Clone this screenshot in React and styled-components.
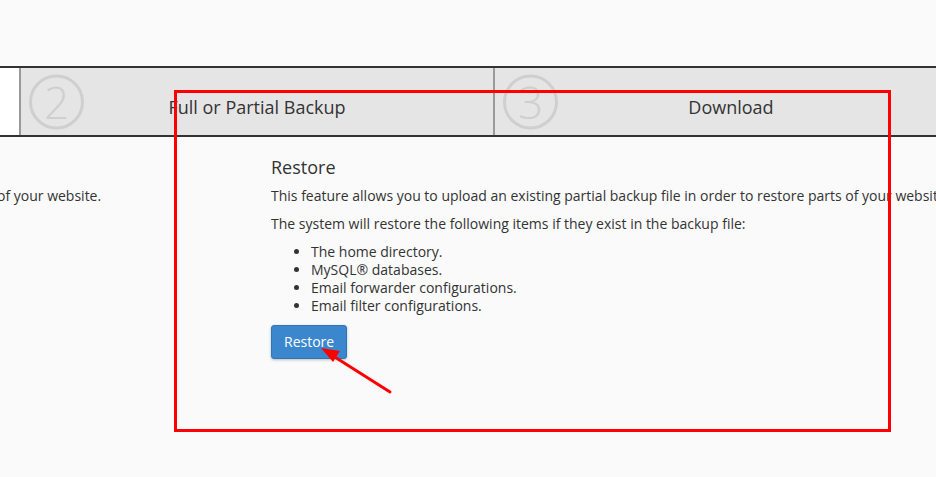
import React from "react";
import styled, { createGlobalStyle } from "styled-components";

const GlobalStyle = createGlobalStyle`
  html, body {
    margin: 0;
    padding: 0;
    background: #fafafa;
    overflow: hidden;
  }
  body {
    font-family: "Open Sans", "Liberation Sans", sans-serif;
    color: #333;
  }
`;

const Page = styled.div`
  position: relative;
  width: 936px;
  height: 477px;
  padding-top: 66px;
  box-sizing: border-box;
`;

const StepBar = styled.div`
  display: flex;
  margin-left: -455px;
  border-top: 2px solid #333;
  border-bottom: 2px solid #333;
  height: 67px;
`;

const Step = styled.div`
  position: relative;
  box-sizing: border-box;
  flex: 0 0 ${(p) => p.width}px;
  display: flex;
  align-items: center;
  justify-content: center;
  padding-top: 10px;
  background: ${(p) => (p.active ? "#fff" : "#e5e5e5")};
  border-left: ${(p) => (p.first ? "none" : "2px solid #9a9a9a")};
  font-size: 18px;
  color: #333;
`;

const StepNumber = styled.div`
  position: absolute;
  left: 8px;
  top: 50%;
  transform: translateY(-50%);
  width: 49px;
  height: 49px;
  border: 3px solid #cfcfcf;
  border-radius: 50%;
  display: flex;
  align-items: center;
  justify-content: center;
  font-size: 44px;
  font-weight: 300;
  color: #cfcfcf;
  line-height: 1;
`;

const Content = styled.div`
  display: flex;
  padding-top: 20px;
`;

const LeftCol = styled.div`
  flex: 0 0 271px;
  padding-top: 29px;
  font-size: 14px;
  line-height: 20px;
  text-indent: -3px;
`;

const RightCol = styled.div`
  flex: 1;
  white-space: nowrap;
`;

const Heading = styled.h3`
  margin: 0 0 9px;
  font-size: 18px;
  font-weight: 400;
  line-height: 20px;
`;

const Text = styled.p`
  margin: 0 0 8px;
  font-size: 14px;
  line-height: 20px;
`;

const List = styled.ul`
  margin: 9px 0 10px;
  padding-left: 40px;
  font-size: 14px;
  line-height: 18px;
`;

const Button = styled.button`
  font-family: inherit;
  font-size: 14px;
  line-height: 20px;
  padding: 6px 12px;
  color: #fff;
  background: #3a87cd;
  border: 1px solid #2f76b8;
  border-radius: 3px;
  box-shadow: 0 1px 3px rgba(0, 0, 0, 0.25);
  cursor: pointer;
`;

const Highlight = styled.div`
  position: absolute;
  left: 174px;
  top: 90px;
  width: 711px;
  height: 336px;
  border: 3px solid #f00;
  pointer-events: none;
`;

const Arrow = styled.svg`
  position: absolute;
  left: 0;
  top: 0;
  pointer-events: none;
`;

export default function App() {
  return (
    <>
      <GlobalStyle />
      <Page>
        <StepBar>
          <Step width={474} active first />
          <Step width={474}>
            <StepNumber>2</StepNumber>
            Full or Partial Backup
          </Step>
          <Step width={474}>
            <StepNumber>3</StepNumber>
            Download
          </Step>
        </StepBar>
        <Content>
          <LeftCol>of your website.</LeftCol>
          <RightCol>
            <Heading>Restore</Heading>
            <Text>
              This feature allows you to upload an existing partial backup file in order to restore parts of your website.
            </Text>
            <Text>The system will restore the following items if they exist in the backup file:</Text>
            <List>
              <li>The home directory.</li>
              <li>MySQL® databases.</li>
              <li>Email forwarder configurations.</li>
              <li>Email filter configurations.</li>
            </List>
            <Button>Restore</Button>
          </RightCol>
        </Content>
        <Highlight />
        <Arrow width="936" height="477" viewBox="0 0 936 477">
          <line x1="390" y1="392" x2="330" y2="354" stroke="#f00" strokeWidth="3" strokeLinecap="round" />
          <polygon points="321,348 340,351 333,362" fill="#f00" />
        </Arrow>
      </Page>
    </>
  );
}
